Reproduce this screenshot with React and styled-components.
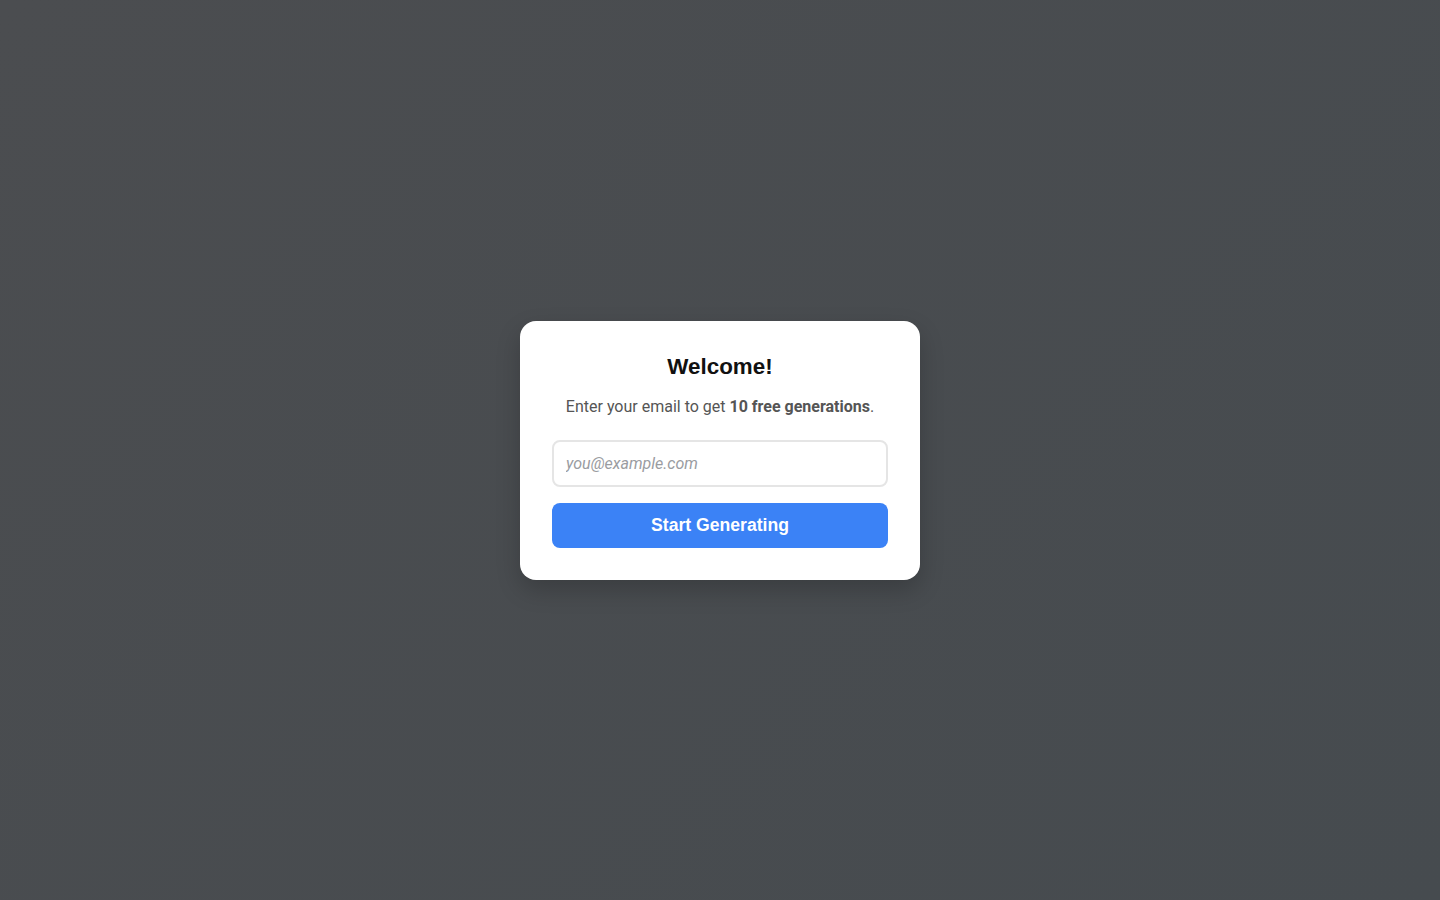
import React from "react";
import styled, { createGlobalStyle } from "styled-components";

const GlobalStyle = createGlobalStyle`
    html, body {
        margin: 0;
        padding: 0;
        height: 100%;
    }
    body {
        font-family: Roboto, "Liberation Sans", Arial, sans-serif;
    }
    #root {
        height: 100%;
    }
`;

const Overlay = styled.div`
    width: 100%;
    height: 100vh;
    display: flex;
    align-items: center;
    justify-content: center;
    background: linear-gradient(135deg, #4b4d50 0%, #464b4f 100%);
`;

const Card = styled.div`
    width: 400px;
    box-sizing: border-box;
    padding: 33px 32px 32px;
    margin-top: 1px;
    background-color: #fff;
    border-radius: 16px;
    box-shadow: 0 10px 25px rgba(0, 0, 0, 0.2);
    text-align: center;
`;

const Title = styled.h2`
    margin: 0 0 15px;
    font-family: "Liberation Sans", Arial, sans-serif;
    font-size: 22.4px;
    line-height: 26px;
    font-weight: 700;
    color: #111;
`;

const Subtitle = styled.p`
    margin: 0 0 21px;
    font-size: 16px;
    line-height: 24px;
    color: #555;

    strong {
        font-weight: 700;
    }
`;

const Input = styled.input`
    display: block;
    width: 100%;
    height: 47px;
    box-sizing: border-box;
    padding: 0 12px;
    border: 2px solid #e5e5e5;
    border-radius: 8px;
    font-family: Roboto, "Liberation Sans", Arial, sans-serif;
    font-size: 16px;
    color: #333;
    outline: none;

    &::placeholder {
        color: #9a9ca1;
        font-style: italic;
    }
`;

const Button = styled.button`
    display: block;
    width: 100%;
    height: 45px;
    margin-top: 16px;
    border: none;
    border-radius: 8px;
    background-color: #3b82f6;
    color: #fff;
    font-family: "Liberation Sans", Arial, sans-serif;
    font-size: 17.6px;
    font-weight: 700;
    cursor: pointer;
`;

const App = () => {
    return (
        <>
            <GlobalStyle />
            <Overlay>
                <Card>
                    <Title>Welcome!</Title>
                    <Subtitle>
                        Enter your email to get <strong>10 free generations</strong>.
                    </Subtitle>
                    <Input type="email" placeholder="you@example.com" />
                    <Button>Start Generating</Button>
                </Card>
            </Overlay>
        </>
    );
};

export default App;
